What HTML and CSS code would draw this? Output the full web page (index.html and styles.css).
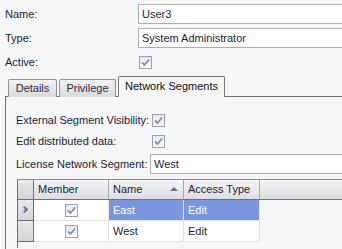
FILE: index.html
```html
<!DOCTYPE html>
<html lang="en">
<head>
    <meta charset="UTF-8">
    <title>User</title>
    <link rel="stylesheet" href="styles.css">
</head>
<body>
    <div class="page">
        <div class="field-row">
            <label class="field-label">Name:</label>
            <div class="text-box">User3</div>
        </div>
        <div class="field-row">
            <label class="field-label">Type:</label>
            <div class="text-box">System Administrator</div>
        </div>
        <div class="field-row">
            <label class="field-label">Active:</label>
            <span class="check"><svg viewBox="0 0 11 11"><path d="M2 5.5 L4.5 8 L9 2.5" /></svg></span>
        </div>

        <div class="tabs">
            <div class="tab">Details</div>
            <div class="tab">Privilege</div>
            <div class="tab active">Network Segments</div>
        </div>

        <div class="tab-panel">
            <div class="panel-row">
                <label class="panel-label">External Segment Visibility:</label>
                <span class="check"><svg viewBox="0 0 11 11"><path d="M2 5.5 L4.5 8 L9 2.5" /></svg></span>
            </div>
            <div class="panel-row">
                <label class="panel-label">Edit distributed data:</label>
                <span class="check"><svg viewBox="0 0 11 11"><path d="M2 5.5 L4.5 8 L9 2.5" /></svg></span>
            </div>
            <div class="panel-row license-row">
                <label class="license-label">License Network Segment:</label>
                <div class="text-box">West</div>
            </div>

            <!-- segment grid -->
            <div class="grid">
                <div class="head row-head"></div>
                <div class="head">Member</div>
                <div class="head sorted">Name <span class="sort-arrow"></span></div>
                <div class="head">Access Type</div>
                <div class="head filler"></div>

                <div class="row-head current"><span class="chevron"></span></div>
                <div class="cell center"><span class="check"><svg viewBox="0 0 11 11"><path d="M2 5.5 L4.5 8 L9 2.5" /></svg></span></div>
                <div class="cell selected">East</div>
                <div class="cell selected">Edit</div>
                <div class="blank"></div>

                <div class="row-head"></div>
                <div class="cell center"><span class="check"><svg viewBox="0 0 11 11"><path d="M2 5.5 L4.5 8 L9 2.5" /></svg></span></div>
                <div class="cell">West</div>
                <div class="cell">Edit</div>
                <div class="blank"></div>
            </div>
        </div>
    </div>
</body>
</html>
```

FILE: styles.css
```css
* {
    margin: 0;
    padding: 0;
    box-sizing: border-box;
}

body {
    background: #f6f7f7;
    color: #1c1c34;
    font-family: "Liberation Sans", Arial, sans-serif;
    font-size: 11px;
    overflow: hidden;
}

.page {
    padding: 4px 0 0 5px;
    width: 342px;
    height: 249px;
}

.field-row {
    display: flex;
    align-items: center;
    height: 20px;
    margin-bottom: 4px;
}

.field-label {
    width: 133px;
    flex-shrink: 0;
}

.text-box {
    flex: 1;
    height: 20px;
    line-height: 18px;
    padding-left: 3px;
    background: #fff;
    border: 1px solid #a9b0b8;
    border-right: none;
    color: #1c1c40;
}

.check {
    display: inline-block;
    width: 13px;
    height: 13px;
    border: 1px solid #96a2b0;
    background: linear-gradient(#e6eaee, #fbfcfc);
}

.check svg {
    display: block;
    width: 11px;
    height: 11px;
}

.check path {
    fill: none;
    stroke: #7d8fab;
    stroke-width: 1.8;
}

.field-row .check {
    margin-left: 1px;
}

/* tabs */
.tabs {
    display: flex;
    align-items: flex-end;
    gap: 2px;
    margin: 0 0 -1px 3px;
    position: relative;
    z-index: 1;
}

.tab {
    height: 18px;
    line-height: 17px;
    text-align: center;
    white-space: nowrap;
    border: 1px solid #8f9296;
    border-bottom: none;
    border-radius: 2px 2px 0 0;
    background: linear-gradient(#f3f3f3, #d9dadc);
    color: #2a2a44;
}

.tab:nth-child(1) {
    width: 49px;
}

.tab:nth-child(2) {
    width: 57px;
}

.tab.active {
    width: 107px;
    height: 21px;
    line-height: 19px;
    background: #f6f7f7;
    border-color: #727477;
    color: #111;
}

.tab-panel {
    border-top: 1px solid #6f7174;
    border-left: 1px solid #6f7174;
    padding: 13px 0 0 10px;
    height: 153px;
}

.panel-row {
    display: flex;
    align-items: center;
    height: 20px;
    margin-bottom: 1px;
}

.panel-label {
    width: 136px;
    flex-shrink: 0;
}

.license-row {
    margin-top: 3px;
}

.license-label {
    width: 134px;
    flex-shrink: 0;
}

/* grid */
.grid {
    display: grid;
    grid-template-columns: 16px 75px 75px 76px 1fr;
    grid-template-rows: 20px 21px 21px;
    margin: 5px 0 0 1px;
    border-top: 1px solid #8a8c90;
    border-left: 1px solid #6d6f72;
    height: 69px;
}

.head {
    line-height: 19px;
    padding-left: 4px;
    background: linear-gradient(#f4f5f6, #dcdee2);
    border-right: 1px solid #a2a5aa;
    border-bottom: 1px solid #6e7073;
    color: #1c1c34;
}

.head.filler {
    border-right: none;
}

.sorted {
    position: relative;
}

.sort-arrow {
    position: absolute;
    right: 5px;
    top: 7px;
    width: 0;
    height: 0;
    border-left: 4px solid transparent;
    border-right: 4px solid transparent;
    border-bottom: 4px solid #6c6f80;
}

.row-head {
    background: linear-gradient(#e8e9ec, #d2d4d8);
    border-right: 1px solid #6d6f72;
    border-bottom: 1px solid #6d6f72;
    padding: 0;
}

.row-head.current {
    position: relative;
}

.chevron {
    position: absolute;
    left: 4px;
    top: 7px;
    width: 5px;
    height: 5px;
    border-top: 2px solid #6c6e8c;
    border-right: 2px solid #6c6e8c;
    transform: rotate(45deg);
}

.cell {
    background: #fff;
    border-right: 1px solid #e2e3e5;
    border-bottom: 1px solid #e2e3e5;
    line-height: 20px;
    padding-left: 4px;
    color: #1c1c34;
}

.cell.center {
    display: flex;
    align-items: center;
    justify-content: center;
    padding-left: 0;
}

.cell.selected {
    background: #7b96dc;
    color: #fff;
}
```
